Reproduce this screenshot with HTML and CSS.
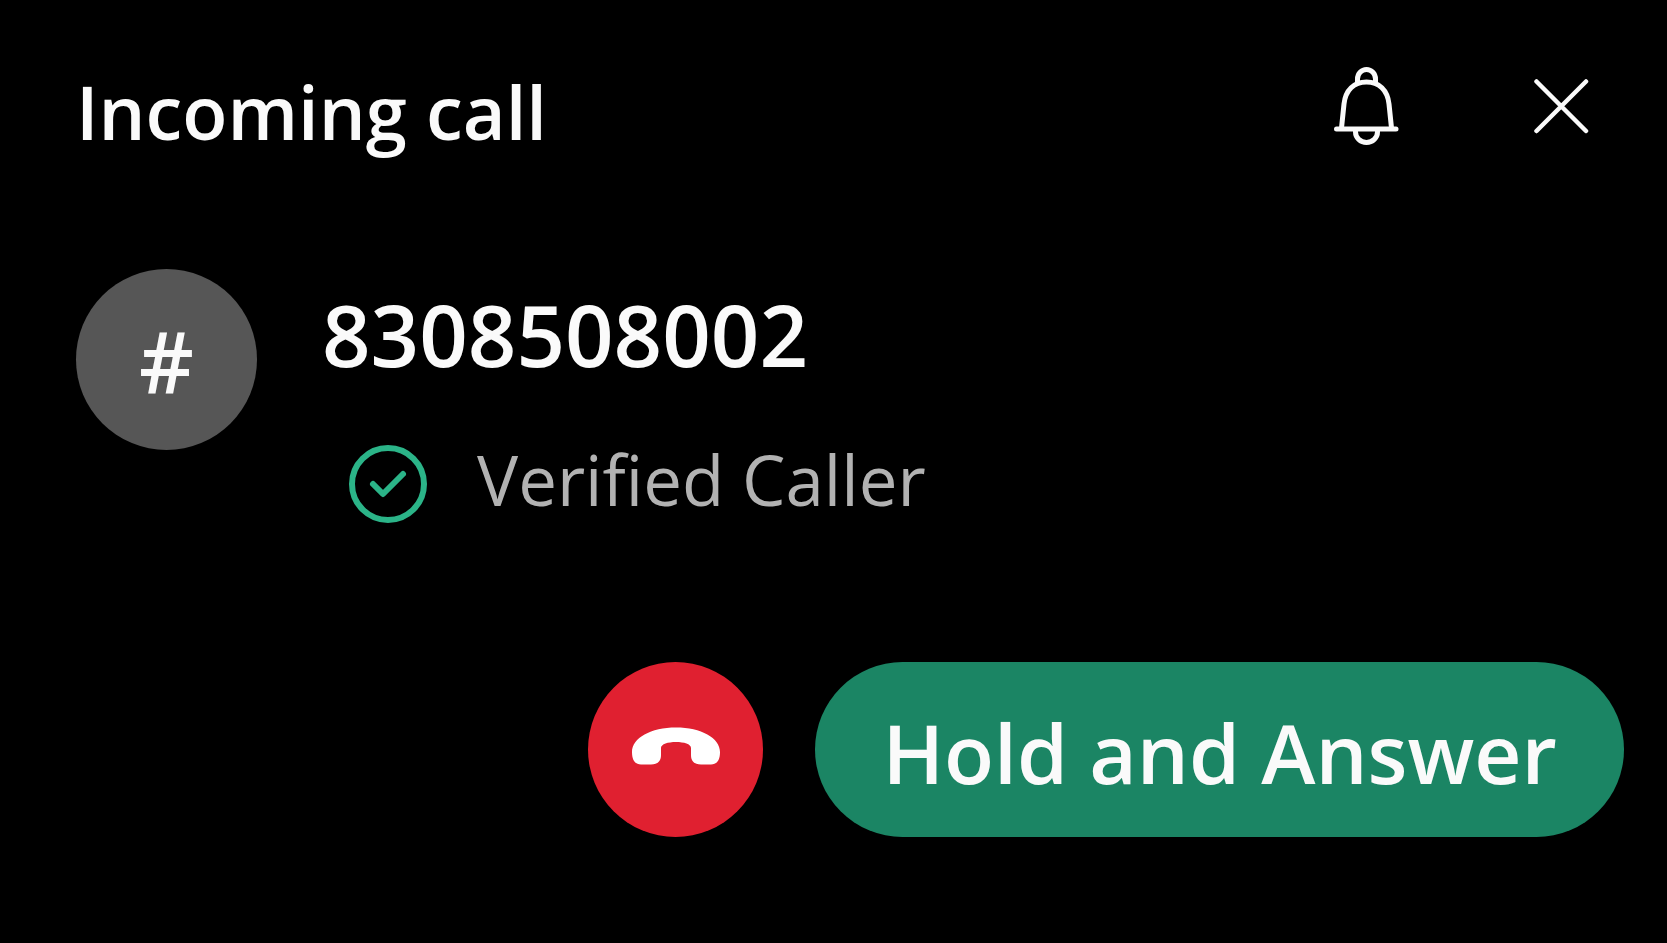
FILE: index.html
```html
<!DOCTYPE html>
<html lang="en">
<head>
<meta charset="utf-8">
<meta name="viewport" content="width=device-width, initial-scale=1">
<title>Incoming call</title>
<link rel="stylesheet" href="styles.css">
</head>
<body>
<main class="call">
  <header class="call-header">
    <h1 class="call-title">Incoming call</h1>
    <div class="call-tools">
      <button class="icon-button" type="button" aria-label="Ringer">
        <svg width="66" height="80" viewBox="0 0 66 80" fill="none" stroke="currentColor" stroke-width="5" stroke-linecap="round" stroke-linejoin="round" aria-hidden="true">
          <path d="M3.500 63H63"/>
          <path d="M8.500 62L11 38C12.500 24 21 16 33.500 16S54.500 24 56 38L58.500 62"/>
          <path d="M24.500 17V13a9 9.500 0 0 1 18 0V17"/>
          <path d="M22.500 64v2a11 10.500 0 0 0 22 0v-2"/>
        </svg>
      </button>
      <button class="icon-button" type="button" aria-label="Close">
        <svg width="56" height="56" viewBox="0 0 56 56" fill="none" stroke="currentColor" stroke-width="4.500" stroke-linecap="round" aria-hidden="true">
          <path d="M3.500 3.500L53 53M53 3.500L3.500 53"/>
        </svg>
      </button>
    </div>
  </header>
  <section class="caller">
    <div class="avatar">#</div>
    <div class="caller-info">
      <p class="caller-number">8308508002</p>
      <p class="caller-status">
        <svg width="80" height="80" viewBox="0 0 80 80" fill="none" stroke="currentColor" aria-hidden="true">
          <circle cx="40" cy="40" r="36" stroke-width="6"/>
          <path d="M25 40L35 50L55 30" stroke-width="6" stroke-linecap="round" stroke-linejoin="round"/>
        </svg>
        <span class="status-text">Verified Caller</span>
      </p>
    </div>
  </section>
  <div class="actions">
    <button class="decline" type="button" aria-label="Decline">
      <svg width="90" height="38" viewBox="0 0 90 38" fill="currentColor" aria-hidden="true">
        <path d="M45 0.500C70 0.500 89 11 89 25C89 33 86 37.500 80 37.500H70C63 37.500 60 34 60 28V21C60 17 53 15 45 15S30 17 30 21V28C30 34 27 37.500 20 37.500H10C4 37.500 1 33 1 25C1 11 20 0.500 45 0.500Z"/>
      </svg>
    </button>
    <button class="answer" type="button">Hold and Answer</button>
  </div>
</main>
</body>
</html>
```
FILE: styles.css
```css
* {
  box-sizing: border-box;
}

body {
  margin: 0;
  background: #000;
  color: #fafafa;
  font-family: "Open Sans", "Noto Sans", sans-serif;
}

button {
  padding: 0;
  border: 0;
  color: inherit;
  font: inherit;
  cursor: pointer;
}

.call {
  display: flex;
  flex-direction: column;
  min-height: 100vh;
  padding: 46px 43px 106px 76px;
}

.call-header {
  display: flex;
  align-items: center;
  justify-content: space-between;
  height: 120px;
  padding-right: 23px;
}

.call-title {
  margin: 0;
  padding-top: 12px;
  font-size: 74px;
  font-weight: 600;
  line-height: 100px;
}

.call-tools {
  display: flex;
  gap: 115px;
}

.icon-button {
  display: grid;
  place-items: center;
  width: 80px;
  height: 80px;
  background: none;
}

.caller {
  display: flex;
  gap: 65px;
  margin-top: 103px;
}

.avatar {
  display: grid;
  flex: none;
  place-items: center;
  width: 181px;
  height: 181px;
  border-radius: 50%;
  background: #565656;
  font-size: 85px;
  font-weight: 600;
  line-height: 100px;
}

.caller-info {
  padding-top: 15px;
}

.caller-number {
  margin: 0;
  font-size: 85px;
  font-weight: 600;
  line-height: 100px;
}

.caller-status {
  display: flex;
  align-items: center;
  gap: 49px;
  margin: 60px 0 0 26px;
  color: #2bb488;
}

.status-text {
  padding-bottom: 10px;
  color: #b2b2b2;
  font-size: 69px;
  line-height: 70px;
}

.actions {
  display: flex;
  justify-content: flex-end;
  gap: 52px;
  margin-top: auto;
}

.decline {
  display: grid;
  place-items: center;
  width: 175px;
  height: 175px;
  padding-bottom: 7px;
  border-radius: 50%;
  background: #e02030;
  color: #fff;
}

.answer {
  height: 175px;
  padding: 4px 67px 0;
  border-radius: 88px;
  background: #1b8564;
  font-size: 82px;
  font-weight: 600;
}
```
